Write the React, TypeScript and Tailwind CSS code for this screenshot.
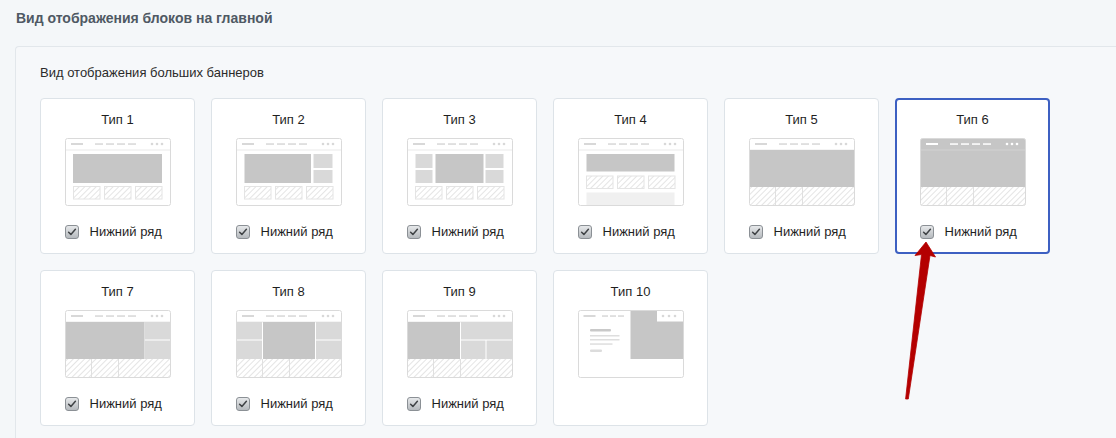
import React from "react";

const DARK = "#c6c6c6";
const LIGHT = "#d9d9d9";
const LINE = "#d8d8d8";

function Hatch({ id }: { id: string }) {
  return (
    <defs>
      <pattern id={id} patternUnits="userSpaceOnUse" width="4" height="4" patternTransform="rotate(45)">
        <rect width="4" height="4" fill="#ffffff" />
        <line x1="0" y1="0" x2="0" y2="4" stroke="#dfdfdf" strokeWidth="1.7" />
      </pattern>
    </defs>
  );
}

function TopBar({ color = LINE, line = "#e9e9e9", dashes = 4 }: { color?: string; line?: string | null; dashes?: number }) {
  const xs = [30, 41, 52, 63].slice(0, dashes);
  return (
    <g>
      <rect x="6" y="5" width="12" height="2" fill={color} />
      {xs.map((x) => (
        <rect key={x} x={x} y="5.3" width="8" height="1.5" fill={color} />
      ))}
      <circle cx="87" cy="6" r="1.3" fill={color} />
      <circle cx="92" cy="6" r="1.3" fill={color} />
      <circle cx="97" cy="6" r="1.3" fill={color} />
      {line && <line x1="0.5" y1="12" x2="105.5" y2="12" stroke={line} strokeWidth="1" />}
    </g>
  );
}

function Frame({ children }: { children: React.ReactNode }) {
  return (
    <svg width="106" height="68" viewBox="0 0 106 68" className="block">
      {children}
    </svg>
  );
}

function Border() {
  return <rect x="0.5" y="0.5" width="105" height="67" rx="2" fill="none" stroke="#dadada" />;
}

// three hatched boxes in a row, inset from the frame
function HatchCells({ id, y, h }: { id: string; y: number; h: number }) {
  return (
    <g>
      {[8.5, 39.5, 70.5].map((x) => (
        <rect key={x} x={x} y={y} width="26.5" height={h} fill={`url(#${id})`} stroke="#e4e4e4" strokeWidth="1" />
      ))}
    </g>
  );
}

// hatched strip across the full width with dividers
function HatchStrip({ id }: { id: string }) {
  return (
    <g>
      <rect x="0.5" y="49" width="105" height="18.5" fill={`url(#${id})`} />
      <line x1="26.5" y1="49" x2="26.5" y2="67.5" stroke="#e0e0e0" />
      <line x1="53.5" y1="49" x2="53.5" y2="67.5" stroke="#e0e0e0" />
    </g>
  );
}

function Thumb({ n }: { n: number }) {
  const id = `hatch-${n}`;
  switch (n) {
    case 1:
      return (
        <Frame>
          <Hatch id={id} />
          <rect x="0.5" y="0.5" width="105" height="67" rx="2" fill="#fff" />
          <TopBar />
          <rect x="8" y="16" width="89" height="29" fill={DARK} />
          <HatchCells id={id} y={48.5} h={12.5} />
          <Border />
        </Frame>
      );
    case 2:
      return (
        <Frame>
          <Hatch id={id} />
          <rect x="0.5" y="0.5" width="105" height="67" rx="2" fill="#fff" />
          <TopBar />
          <rect x="8.5" y="16" width="66.5" height="29" fill={DARK} />
          <rect x="77.5" y="16" width="19" height="14" fill={LIGHT} />
          <rect x="77.5" y="32" width="19" height="13" fill={LIGHT} />
          <HatchCells id={id} y={48.5} h={12.5} />
          <Border />
        </Frame>
      );
    case 3:
      return (
        <Frame>
          <Hatch id={id} />
          <rect x="0.5" y="0.5" width="105" height="67" rx="2" fill="#fff" />
          <TopBar />
          <rect x="8.5" y="16" width="17" height="14" fill={LIGHT} />
          <rect x="8.5" y="32" width="17" height="13" fill={LIGHT} />
          <rect x="28.5" y="16" width="48" height="29" fill={DARK} />
          <rect x="78.5" y="16" width="18" height="14" fill={LIGHT} />
          <rect x="78.5" y="32" width="18" height="13" fill={LIGHT} />
          <HatchCells id={id} y={48.5} h={12.5} />
          <Border />
        </Frame>
      );
    case 4:
      return (
        <Frame>
          <Hatch id={id} />
          <rect x="0.5" y="0.5" width="105" height="67" rx="2" fill="#fff" />
          <TopBar />
          <rect x="8.5" y="16" width="88" height="17.5" fill={DARK} />
          <HatchCells id={id} y={38} h={12.5} />
          <rect x="8.5" y="54.5" width="88" height="13" fill="#f0f0f0" />
          <Border />
        </Frame>
      );
    case 5:
      return (
        <Frame>
          <Hatch id={id} />
          <rect x="0.5" y="0.5" width="105" height="67" rx="2" fill="#fff" />
          <TopBar />
          <rect x="0.5" y="12" width="105" height="37" fill={DARK} />
          <HatchStrip id={id} />
          <Border />
        </Frame>
      );
    case 6:
      return (
        <Frame>
          <Hatch id={id} />
          <rect x="0.5" y="0.5" width="105" height="67" rx="2" fill="#fff" />
          <path d="M0.5 49 V2.5 A2 2 0 0 1 2.5 0.5 H103.5 A2 2 0 0 1 105.5 2.5 V49 Z" fill={DARK} />
          <TopBar color="#ffffff" line="#d2d2d2" />
          <HatchStrip id={id} />
          <Border />
        </Frame>
      );
    case 7:
      return (
        <Frame>
          <Hatch id={id} />
          <rect x="0.5" y="0.5" width="105" height="67" rx="2" fill="#fff" />
          <TopBar />
          <rect x="0.5" y="12" width="79" height="37" fill={DARK} />
          <rect x="79.5" y="12" width="26" height="17.5" fill={LIGHT} />
          <rect x="79.5" y="30.5" width="26" height="18.5" fill={LIGHT} />
          <HatchStrip id={id} />
          <Border />
        </Frame>
      );
    case 8:
      return (
        <Frame>
          <Hatch id={id} />
          <rect x="0.5" y="0.5" width="105" height="67" rx="2" fill="#fff" />
          <TopBar />
          <rect x="0.5" y="12" width="25.5" height="17.5" fill={LIGHT} />
          <rect x="0.5" y="30.5" width="25.5" height="18.5" fill={LIGHT} />
          <rect x="27" y="12" width="52" height="37" fill={DARK} />
          <rect x="80" y="12" width="25.5" height="17.5" fill={LIGHT} />
          <rect x="80" y="30.5" width="25.5" height="18.5" fill={LIGHT} />
          <HatchStrip id={id} />
          <Border />
        </Frame>
      );
    case 9:
      return (
        <Frame>
          <Hatch id={id} />
          <rect x="0.5" y="0.5" width="105" height="67" rx="2" fill="#fff" />
          <TopBar />
          <rect x="0.5" y="12" width="52.5" height="37" fill={DARK} />
          <rect x="54" y="12" width="51.5" height="17.5" fill={LIGHT} />
          <rect x="54" y="30.5" width="24.5" height="18.5" fill={LIGHT} />
          <rect x="79.5" y="30.5" width="26" height="18.5" fill={LIGHT} />
          <HatchStrip id={id} />
          <Border />
        </Frame>
      );
    default:
      return (
        <Frame>
          <rect x="0.5" y="0.5" width="105" height="67" rx="2" fill="#fff" />
          <path d="M52.5 0.5 H103.5 A2 2 0 0 1 105.5 2.5 V49 H52.5 Z" fill={DARK} />
          <rect x="79" y="0.5" width="26.5" height="11" fill="#fff" />
          <circle cx="85" cy="6" r="1.3" fill={LINE} />
          <circle cx="91" cy="6" r="1.3" fill={LINE} />
          <circle cx="97" cy="6" r="1.3" fill={LINE} />
          <rect x="5.5" y="5" width="12" height="2" fill={LINE} />
          <rect x="24" y="5.3" width="6" height="1.5" fill={LINE} />
          <rect x="32" y="5.3" width="6" height="1.5" fill={LINE} />
          <rect x="40" y="5.3" width="6" height="1.5" fill={LINE} />
          <rect x="12" y="19" width="21" height="2.5" rx="1" fill="#c9c9c9" />
          <rect x="12" y="25" width="29.5" height="1.5" fill="#dedede" />
          <rect x="12" y="29" width="29.5" height="1.5" fill="#dedede" />
          <rect x="12" y="33.3" width="22.5" height="1.5" fill="#dedede" />
          <rect x="12" y="39.5" width="12" height="2.5" rx="1" fill="#dcdcdc" />
          <Border />
        </Frame>
      );
  }
}

function Checkbox() {
  return (
    <span className="flex h-[14px] w-[14px] shrink-0 items-center justify-center rounded-[3px] border border-[#8b9095] bg-gradient-to-b from-[#e6e8ea] to-[#b6babe]">
      <svg width="10" height="10" viewBox="0 0 10 10">
        <path d="M1.6 5.2 L3.9 7.4 L8.4 2.3" fill="none" stroke="#3f4245" strokeWidth="1.5" strokeLinecap="round" strokeLinejoin="round" />
      </svg>
    </span>
  );
}

function Card({ n, selected }: { n: number; selected?: boolean }) {
  return (
    <div
      className={
        selected
          ? "flex h-[156px] w-[155px] flex-col items-center rounded-[4px] border-2 border-[#3d60c2] bg-white pt-[12px]"
          : "flex h-[156px] w-[155px] flex-col items-center rounded-[4px] border border-[#dde3e8] bg-white pt-[13px]"
      }
    >
      <div className="h-[16px] text-[13px] leading-[16px] text-[#1f1f1f]">Тип {n}</div>
      <div className="mt-[10px]">
        <Thumb n={n} />
      </div>
      {n !== 10 && (
        <div className="mt-[18px] flex w-[106px] items-center gap-[11px]">
          <Checkbox />
          <span className="text-[13px] leading-[15px] text-[#1f1f1f]">Нижний ряд</span>
        </div>
      )}
    </div>
  );
}

export default function App() {
  const cards = [1, 2, 3, 4, 5, 6, 7, 8, 9, 10];
  return (
    <div className="relative h-[438px] w-[1116px] overflow-hidden bg-[#f4f7f9] font-['Liberation_Sans',Arial,sans-serif]">
      <div className="px-4 pt-[10px] text-[14px] font-bold leading-[16px] text-[#4f5964]">
        Вид отображения блоков на главной
      </div>
      <div className="ml-[15px] mt-[20px] h-[400px] rounded-tl-[4px] border-l border-t border-[#e2e7eb] bg-[#f6f8fa] pl-[24px] pt-[18px]">
        <div className="text-[13px] leading-[16px] text-[#2b2b2b]">Вид отображения больших баннеров</div>
        <div className="mt-[17px] flex w-[1040px] flex-wrap gap-x-[16px] gap-y-[16px]">
          {cards.map((n) => (
            <Card key={n} n={n} selected={n === 6} />
          ))}
        </div>
      </div>
      <svg className="pointer-events-none absolute inset-0" width="1116" height="438" viewBox="0 0 1116 438">
        <polygon
          points="926,242 935.5,257 930,255.5 908.3,399 905.6,399 921.5,254.5 915,255.5"
          fill="#b40000"
          stroke="#b40000"
          strokeWidth="0.8"
          strokeLinejoin="round"
        />
      </svg>
    </div>
  );
}
